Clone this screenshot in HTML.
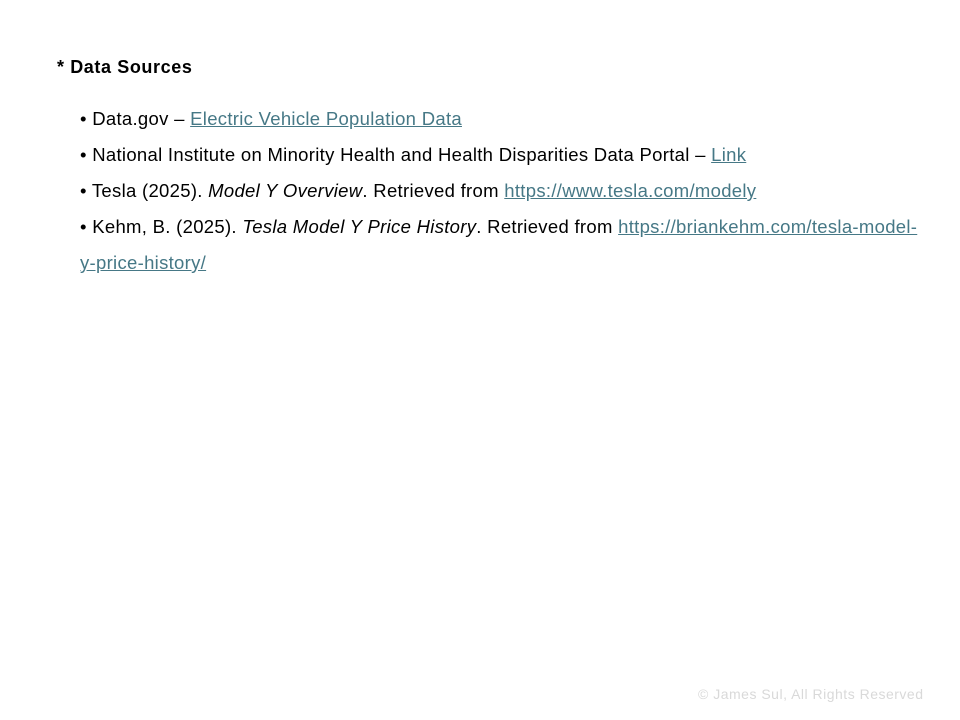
<!DOCTYPE html>
<html><head><style>
body{margin:0;width:960px;height:720px;background:#fff;font-family:"Liberation Sans",sans-serif;color:#000;position:relative;overflow:hidden}
.l{position:absolute;left:80px;font-size:18.5px;line-height:20px;white-space:nowrap;letter-spacing:0.3px}
a{color:#467886;text-decoration:underline}
h1{position:absolute;left:57px;top:57px;margin:0;font-size:18px;font-weight:bold;line-height:20px;letter-spacing:0.6px}
.f{position:absolute;left:698px;top:686px;font-size:14px;color:#d9d9d9;white-space:nowrap;letter-spacing:0.5px}
</style></head><body>
<h1>* Data Sources</h1>
<div class="l" style="top:109px">• Data.gov – <a>Electric Vehicle Population Data</a></div>
<div class="l" style="top:145px">• National Institute on Minority Health and Health Disparities Data Portal – <a>Link</a></div>
<div class="l" style="top:181px">• Tesla (2025). <i>Model Y Overview</i>. Retrieved from <a>https://www.tesla.com/modely</a></div>
<div class="l" style="top:217px">• Kehm, B. (2025). <i>Tesla Model Y Price History</i>. Retrieved from <a>https://briankehm.com/tesla-model-</a></div>
<div class="l" style="top:253px"><a>y-price-history/</a></div>
<div class="f">© James Sul, All Rights Reserved</div>
</body></html>
